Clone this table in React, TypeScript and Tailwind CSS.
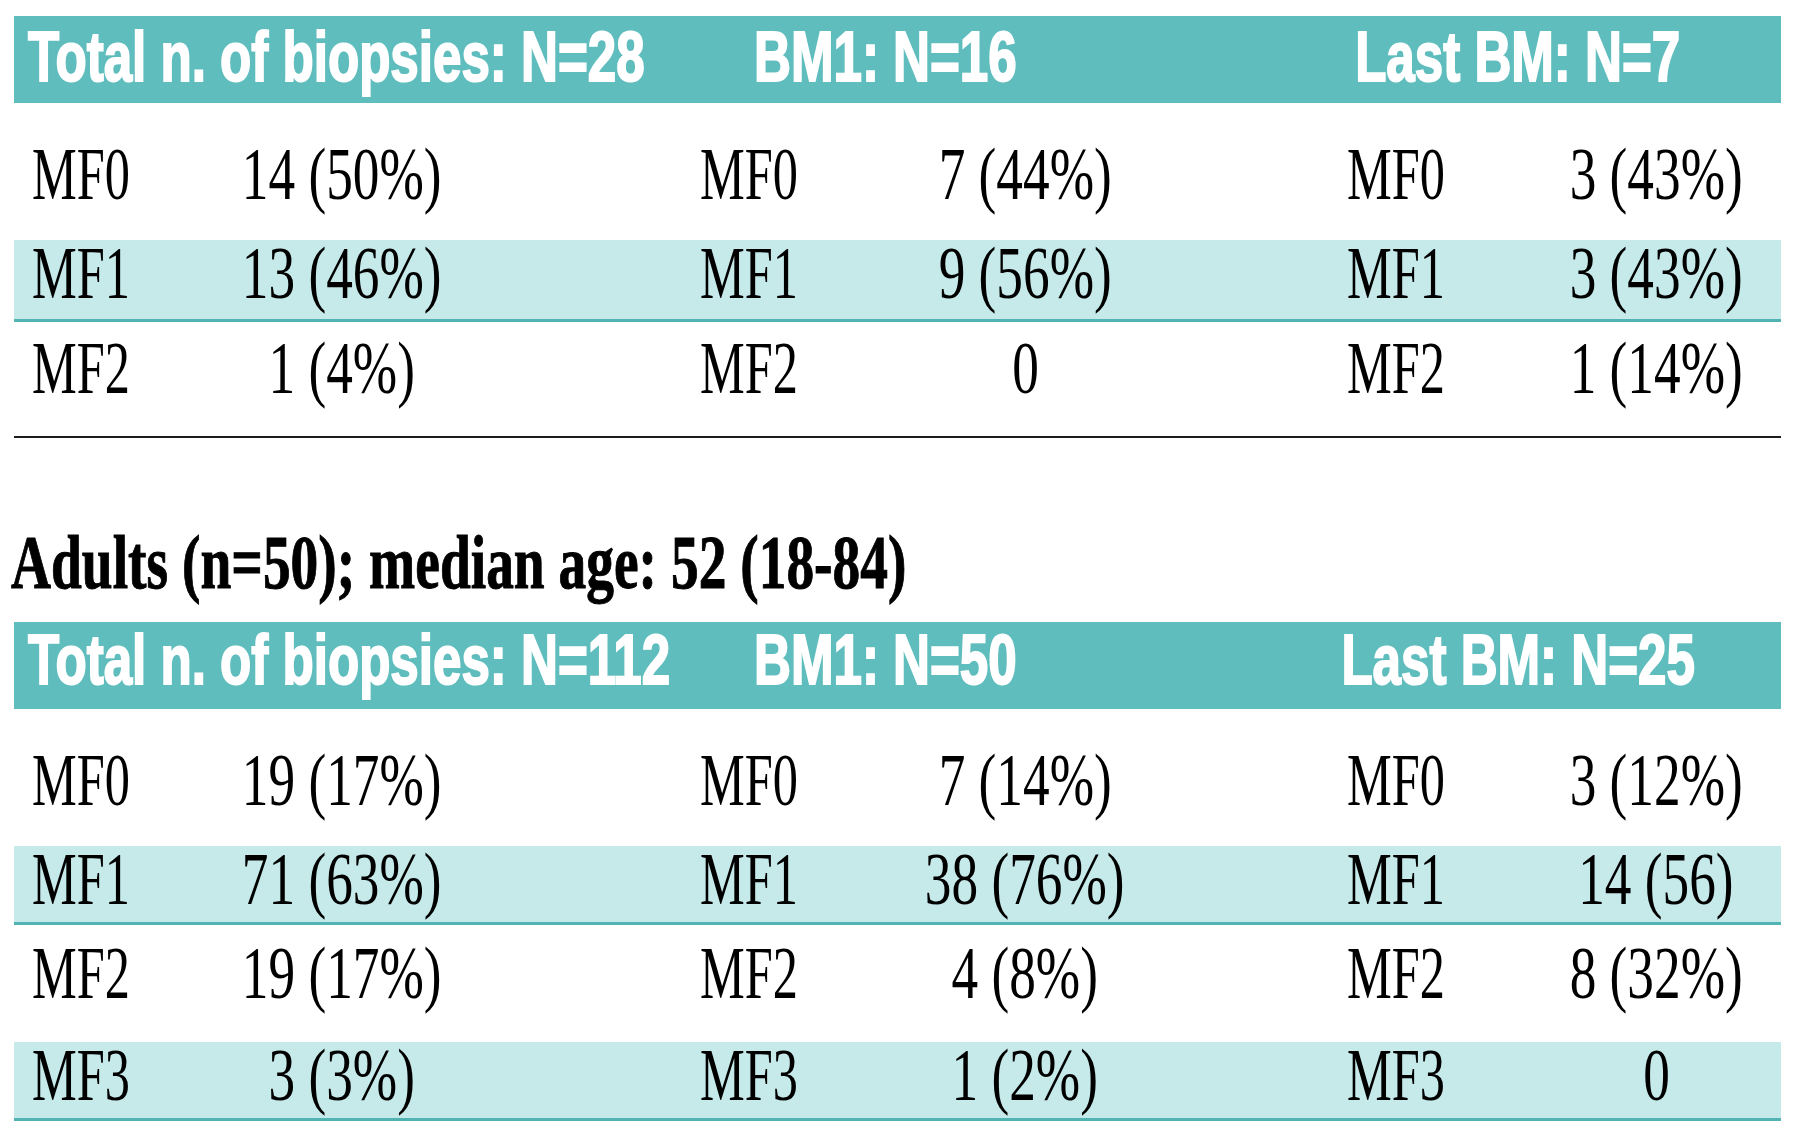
import React from "react";

const sans = "font-['Liberation_Sans',Arial,sans-serif]";
const serif = "font-['Liberation_Serif','Times_New_Roman',serif]";

type Row = { label: string; v: [string, string, string]; cls: string };

function Header({ a, b, c, pt }: { a: string; b: string; c: string; pt: string }) {
  const txt = `${sans} font-bold text-[70px] leading-[70px] text-white whitespace-nowrap inline-block scale-x-[0.73] [-webkit-text-stroke:2px_white]`;
  return (
    <div className={`flex h-[87px] bg-[#5fbdbe] ${pt}`}>
      <div className="flex w-[726px] pl-[14px] items-start">
        <span className={`${txt} origin-left`}>{a}</span>
      </div>
      <div className="flex w-[515px] pl-[14px] items-start">
        <span className={`${txt} origin-left`}>{b}</span>
      </div>
      <div className="flex w-[526px] justify-center items-start">
        <span className={`${txt} origin-center`}>{c}</span>
      </div>
    </div>
  );
}

function Label({ t }: { t: string }) {
  return (
    <span className={`${serif} text-[74px] leading-[66px] text-black whitespace-nowrap inline-block scale-x-[0.68] origin-left`}>
      {t}
    </span>
  );
}

function Value({ t }: { t: string }) {
  return (
    <span className={`${serif} text-[74px] leading-[66px] text-black whitespace-nowrap inline-block scale-x-[0.72] origin-center`}>
      {t}
    </span>
  );
}

function DataRow({ r }: { r: Row }) {
  return (
    <div className={`flex items-start ${r.cls}`}>
      <div className="flex w-[228px] pl-[18px]">
        <Label t={r.label} />
      </div>
      <div className="flex w-[200px] justify-center">
        <Value t={r.v[0]} />
      </div>
      <div className="flex w-[483px] pl-[258px]">
        <Label t={r.label} />
      </div>
      <div className="flex w-[200px] justify-center">
        <Value t={r.v[1]} />
      </div>
      <div className="flex w-[431px] pl-[222px]">
        <Label t={r.label} />
      </div>
      <div className="flex w-[200px] justify-center">
        <Value t={r.v[2]} />
      </div>
    </div>
  );
}

const table1: Row[] = [
  { label: "MF0", v: ["14 (50%)", "7 (44%)", "3 (43%)"], cls: "h-[137px] pt-[38px] bg-white" },
  {
    label: "MF1",
    v: ["13 (46%)", "9 (56%)", "3 (43%)"],
    cls: "h-[82px] bg-[#c6eaea] border-b-[3px] border-[#52b3b3]",
  },
  { label: "MF2", v: ["1 (4%)", "0", "1 (14%)"], cls: "h-[114px] pt-[13px] bg-white" },
];

const table2: Row[] = [
  { label: "MF0", v: ["19 (17%)", "7 (14%)", "3 (12%)"], cls: "h-[137px] pt-[38px] bg-white" },
  {
    label: "MF1",
    v: ["71 (63%)", "38 (76%)", "14 (56)"],
    cls: "h-[79px] bg-[#c6eaea] border-b-[3px] border-[#52b3b3]",
  },
  { label: "MF2", v: ["19 (17%)", "4 (8%)", "8 (32%)"], cls: "h-[117px] pt-[15px] bg-white" },
  {
    label: "MF3",
    v: ["3 (3%)", "1 (2%)", "0"],
    cls: "h-[79px] bg-[#c6eaea] border-b-[3px] border-[#52b3b3]",
  },
];

export default function App() {
  return (
    <div className="min-h-screen w-[1800px] bg-white pt-[16px] pl-[14px] overflow-hidden">
      <div className="w-[1767px] flex flex-col">
        <Header a="Total n. of biopsies: N=28" b="BM1: N=16" c="Last BM: N=7" pt="pt-[6px]" />
        {table1.map((r) => (
          <DataRow key={r.label} r={r} />
        ))}
        <div className="h-[2px] bg-[#1c1c1c]" />

        <div className="mt-[86px] h-[77px] -ml-[3px] flex items-start">
          <span
            className={`${serif} font-bold text-[77px] leading-[77px] text-black whitespace-nowrap inline-block scale-x-[0.72] origin-left [-webkit-text-stroke:1px_black]`}
          >
            Adults (n=50); median age: 52 (18-84)
          </span>
        </div>

        <div className="mt-[21px]">
          <Header a="Total n. of biopsies: N=112" b="BM1: N=50" c="Last BM: N=25" pt="pt-[3px]" />
        </div>
        {table2.map((r) => (
          <DataRow key={r.label} r={r} />
        ))}
      </div>
    </div>
  );
}
